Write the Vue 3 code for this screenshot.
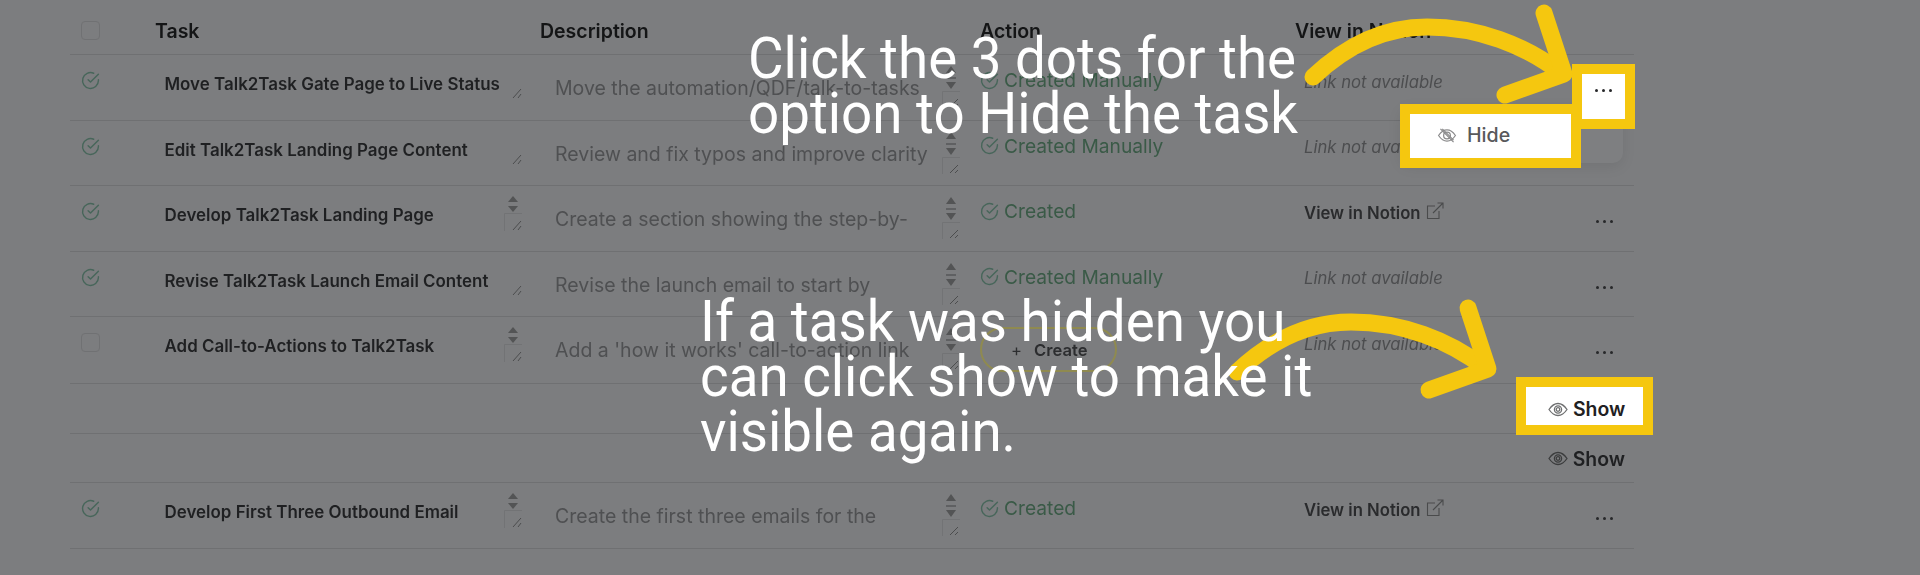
<script setup>
const rows = [
  { id: 1, done: true, task: 'Move Talk2Task Gate Page to Live Status', spin: false, desc: 'Move the automation/QDF/talk-to-tasks', action: 'Created Manually', link: false },
  { id: 2, done: true, task: 'Edit Talk2Task Landing Page Content', spin: false, desc: 'Review and fix typos and improve clarity', action: 'Created Manually', link: false },
  { id: 3, done: true, task: 'Develop Talk2Task Landing Page', spin: true, desc: 'Create a section showing the step-by-', action: 'Created', link: true },
  { id: 4, done: true, task: 'Revise Talk2Task Launch Email Content', spin: false, desc: 'Revise the launch email to start by', action: 'Created Manually', link: false },
  { id: 5, done: false, task: 'Add Call-to-Actions to Talk2Task', spin: true, desc: "Add a 'how it works' call-to-action link", action: '', link: false, tall: true },
  { id: 6, hidden: true, show: false },
  { id: 7, hidden: true, show: true },
  { id: 8, done: true, task: 'Develop First Three Outbound Email', spin: true, desc: 'Create the first three emails for the', action: 'Created', link: true }
]
const arrow = 'M1313 77C1350 42 1388 27 1427 27C1478 27 1525 45 1561 73'
const head = 'M1544 13L1564 74L1505 95'
const arrow2 = 'M1237 372C1274 337 1312 322 1351 322C1402 322 1449 340 1485 368'
const head2 = 'M1468 308L1488 369L1429 390'
</script>

<template>
  <div class="page">
    <div class="table">
      <div class="row head">
        <div class="c-check"><span class="box"></span></div>
        <div class="h-task">Task</div>
        <div class="h-desc">Description</div>
        <div class="h-action">Action</div>
        <div class="h-view">View in Notion</div>
      </div>

      <div v-for="r in rows" :key="r.id" class="row" :class="{ hiddenrow: r.hidden, tall: r.tall }">
        <template v-if="r.hidden">
          <div v-if="r.show" class="show-cell">
            <svg class="eye" viewBox="0 0 20 14" fill="none" stroke="#3b3c3d" stroke-width="1.3">
              <path d="M1 7C4 2.6 7 1 10 1s6 1.600 9 6c-3 4.400-6 6-9 6S4 11.400 1 7Z" />
              <circle cx="10" cy="7" r="3.600" />
              <circle cx="10" cy="7" r="1.800" />
            </svg>
            <span class="show-text">Show</span>
          </div>
        </template>
        <template v-else>
          <div class="c-check">
            <svg v-if="r.done" class="check" viewBox="0 0 24 24" fill="none" stroke="#47665a" stroke-width="1.800" stroke-linecap="round" stroke-linejoin="round">
              <path d="M22 11.080V12a10 10 0 1 1-5.930-9.140" />
              <path d="M22 4 12 14.010 9 11.010" />
            </svg>
            <span v-else class="box"></span>
          </div>

          <div class="c-task">
            <span class="task-text">{{ r.task }}</span>
            <svg v-if="r.spin" class="ctl-task" viewBox="0 0 18 35" fill="none">
              <path d="M4 6 9 0l5 6Z" fill="#535455" />
              <path d="M4 10h10l-5 6Z" fill="#535455" />
              <path d="M0.500 35V17.500H18" stroke="#727375" />
              <path d="M9 34l8-9M14 34l3-4" stroke="#4c4d4e" />
            </svg>
            <svg v-else class="hatch-task" viewBox="0 0 10 11" fill="none">
              <path d="M1 10l8-9M6 10l3-4" stroke="#4c4d4e" />
            </svg>
          </div>

          <div class="c-desc">
            <span class="desc-text">{{ r.desc }}</span>
            <svg class="ctl-desc" viewBox="0 0 18 42" fill="none">
              <path d="M4 7 9 0l5 7Z" fill="#535455" />
              <path d="M4 12h10" stroke="#565758" stroke-width="1.500" />
              <path d="M4 16h10l-5 7Z" fill="#535455" />
              <path d="M0.500 42V25.500H18" stroke="#727375" />
              <path d="M8 41l8-8M13 41l3-3" stroke="#4c4d4e" />
            </svg>
          </div>

          <div class="c-action">
            <template v-if="r.action">
              <svg class="check small" viewBox="0 0 24 24" fill="none" stroke="#47665a" stroke-width="1.800" stroke-linecap="round" stroke-linejoin="round">
                <path d="M22 11.080V12a10 10 0 1 1-5.930-9.140" />
                <path d="M22 4 12 14.010 9 11.010" />
              </svg>
              <span class="action-text">{{ r.action }}</span>
            </template>
            <div v-else class="create"><span class="plus">+</span><span>Create</span></div>
          </div>

          <div class="c-view">
            <template v-if="r.link">
              <span class="view-link">View in Notion</span>
              <svg class="ext" viewBox="0 0 18 18" fill="none" stroke="#4a4b4c" stroke-width="1.100">
                <path d="M9 4H1.500v12.500H13V9" />
                <path d="M7 11 16.500 1.500M11.500 1h5.500v5.500" />
              </svg>
            </template>
            <span v-else class="no-link">Link not available</span>
          </div>

          <div class="c-more"><span class="dots"><i></i><i></i><i></i></span></div>
        </template>
      </div>
    </div>

    <div class="menu"></div>

    <div class="mark mark-hide">
      <svg class="eye" viewBox="0 0 20 16" fill="none" stroke="#8b8b8c" stroke-width="1.300">
        <path d="M1 8C4 3.600 7 2 10 2s6 1.600 9 6c-3 4.400-6 6-9 6S4 12.400 1 8Z" />
        <circle cx="10" cy="8" r="3.600" />
        <path d="M3 1l14 14M5 1l12 12" />
      </svg>
      <span class="hide-text">Hide</span>
    </div>

    <div class="mark mark-dots"><span class="dots"><i></i><i></i><i></i></span></div>

    <div class="mark mark-show">
      <svg class="eye" viewBox="0 0 20 14" fill="none" stroke="#6e6f70" stroke-width="1.300">
        <path d="M1 7C4 2.600 7 1 10 1s6 1.600 9 6c-3 4.400-6 6-9 6S4 11.400 1 7Z" />
        <circle cx="10" cy="7" r="3.600" />
        <circle cx="10" cy="7" r="1.800" />
      </svg>
      <span class="show-text">Show</span>
    </div>

    <svg class="arrows" viewBox="0 0 1920 575" fill="none" stroke="#f5c70f" stroke-width="17" stroke-linecap="round" stroke-linejoin="round">
      <path :d="arrow" />
      <path :d="head" />
      <path :d="arrow2" />
      <path :d="head2" />
    </svg>

    <div class="note note-one">Click the 3 dots for the<br />option to Hide the task</div>
    <div class="note note-two">If a task was hidden you<br />can click show to make it<br />visible again.</div>
  </div>
</template>

<style scoped>
.page {
  position: relative;
  width: 1920px;
  height: 575px;
  overflow: hidden;
  background: #7c7d7f;
  font-family: Inter, "Liberation Sans", sans-serif;
}
.table {
  width: 1564px;
  margin-left: 70px;
  filter: blur(0.5px);
}
.row {
  display: grid;
  grid-template-columns: 85px 385px 440px 315px 265px 74px;
  height: 65.5px;
  box-sizing: border-box;
  border-bottom: 1.5px solid #6f7072;
}
.head {
  height: 55px;
  align-items: start;
  color: #141516;
  font-size: 19.500px;
  font-weight: 600;
  line-height: 22px;
}
.tall { height: 67px; }
.hiddenrow { height: 49.5px; }
.head .c-check { padding-top: 21px; }
.h-task, .h-desc, .h-action, .h-view { padding-top: 20px; }
.h-view { grid-column: 5 / 7; }
.c-check { padding: 16px 0 0 11px; box-sizing: border-box; }
.box {
  display: block;
  width: 19px;
  height: 19px;
  box-sizing: border-box;
  border: 1.5px solid #707173;
  border-radius: 4px;
}
.check { display: block; width: 19px; height: 19px; flex: none; }
.c-task {
  display: flex;
  justify-content: space-between;
  padding: 19px 18px 0 9.5px;
  font-size: 16.950px;
  font-weight: 600;
  line-height: 20px;
  color: #1f2022;
}
.task-text { white-space: nowrap; }
.ctl-task { width: 18px; height: 35px; margin-top: -9px; flex: none; }
.hatch-task { width: 10px; height: 11px; margin-top: 14px; flex: none; }
.c-desc {
  display: flex;
  justify-content: space-between;
  padding: 22px 20px 0 15px;
  font-size: 19.500px;
  line-height: 22px;
  color: #4f5052;
}
.desc-text { white-space: nowrap; }
.ctl-desc { width: 18px; height: 42px; margin-top: -11px; flex: none; }
.c-action {
  display: flex;
  align-items: center;
  align-self: start;
  gap: 5px;
  height: 20px;
  margin-top: 15px;
  font-size: 19.200px;
  color: #3a5a47;
}
.create {
  display: flex;
  align-items: center;
  box-sizing: border-box;
  width: 137px;
  height: 45px;
  flex: none;
  margin-top: 15px;
  padding-left: 29px;
  gap: 12px;
  border: 2px solid #8f8a50;
  border-radius: 23px;
  font-size: 16.600px;
  font-weight: 600;
  color: #2c2d2f;
}
.plus { font-weight: 400; }
.c-view {
  display: flex;
  align-items: flex-start;
  align-self: start;
  margin-top: 16.500px;
  padding-left: 9px;
  gap: 5px;
  line-height: 20px;
  font-size: 16.700px;
}
.no-link { font-style: italic; color: #4c4d4f; }
.view-link { font-weight: 600; color: #2a2b2d; }
.ext { width: 18px; height: 18px; margin-top: -1px; flex: none; }
.c-more { padding: 34px 21px 0 0; display: flex; justify-content: flex-end; align-items: flex-start; }
.dots { display: flex; gap: 4px; }
.dots i { display: block; width: 3px; height: 3px; border-radius: 50%; background: #27282a; }
.show-cell {
  grid-column: 1 / -1;
  display: flex;
  justify-content: flex-end;
  align-items: center;
  padding: 2px 9px 0 0;
  gap: 5px;
}
.eye { width: 20px; height: 15px; flex: none; }
.show-text { font-size: 19.400px; font-weight: 600; color: #1f2022; }
.menu {
  position: absolute;
  left: 1400px;
  top: 105px;
  width: 223px;
  height: 58px;
  border-radius: 10px;
  background: #7e7f81;
  box-shadow: 0 4px 14px rgba(0, 0, 0, 0.08);
}
.mark {
  position: absolute;
  display: flex;
  align-items: center;
  box-sizing: border-box;
  background: #fff;
  border: 10px solid #f5c70f;
}
.mark-hide { left: 1400px; top: 104px; width: 181px; height: 64px; padding: 0 0 2px 27px; gap: 10px; z-index: 2; }
.hide-text { font-size: 19.600px; font-weight: 500; color: #58595b; }
.mark-dots { left: 1572px; top: 64px; width: 63px; height: 65px; justify-content: center; padding-bottom: 13px; }
.mark-show { left: 1516px; top: 377px; width: 137px; height: 58px; padding: 6px 0 0 22px; gap: 5px; }
.arrows { position: absolute; left: 0; top: 0; width: 1920px; height: 575px; z-index: 3; }
.note {
  position: absolute;
  z-index: 4;
  color: #fff;
  font-family: Roboto, sans-serif;
  font-size: 58px;
  line-height: 55px;
  white-space: nowrap;
  transform: scaleX(0.943);
  transform-origin: left top;
}
.note-one { left: 748px; top: 31px; }
.note-two { left: 700px; top: 294px; }
</style>
